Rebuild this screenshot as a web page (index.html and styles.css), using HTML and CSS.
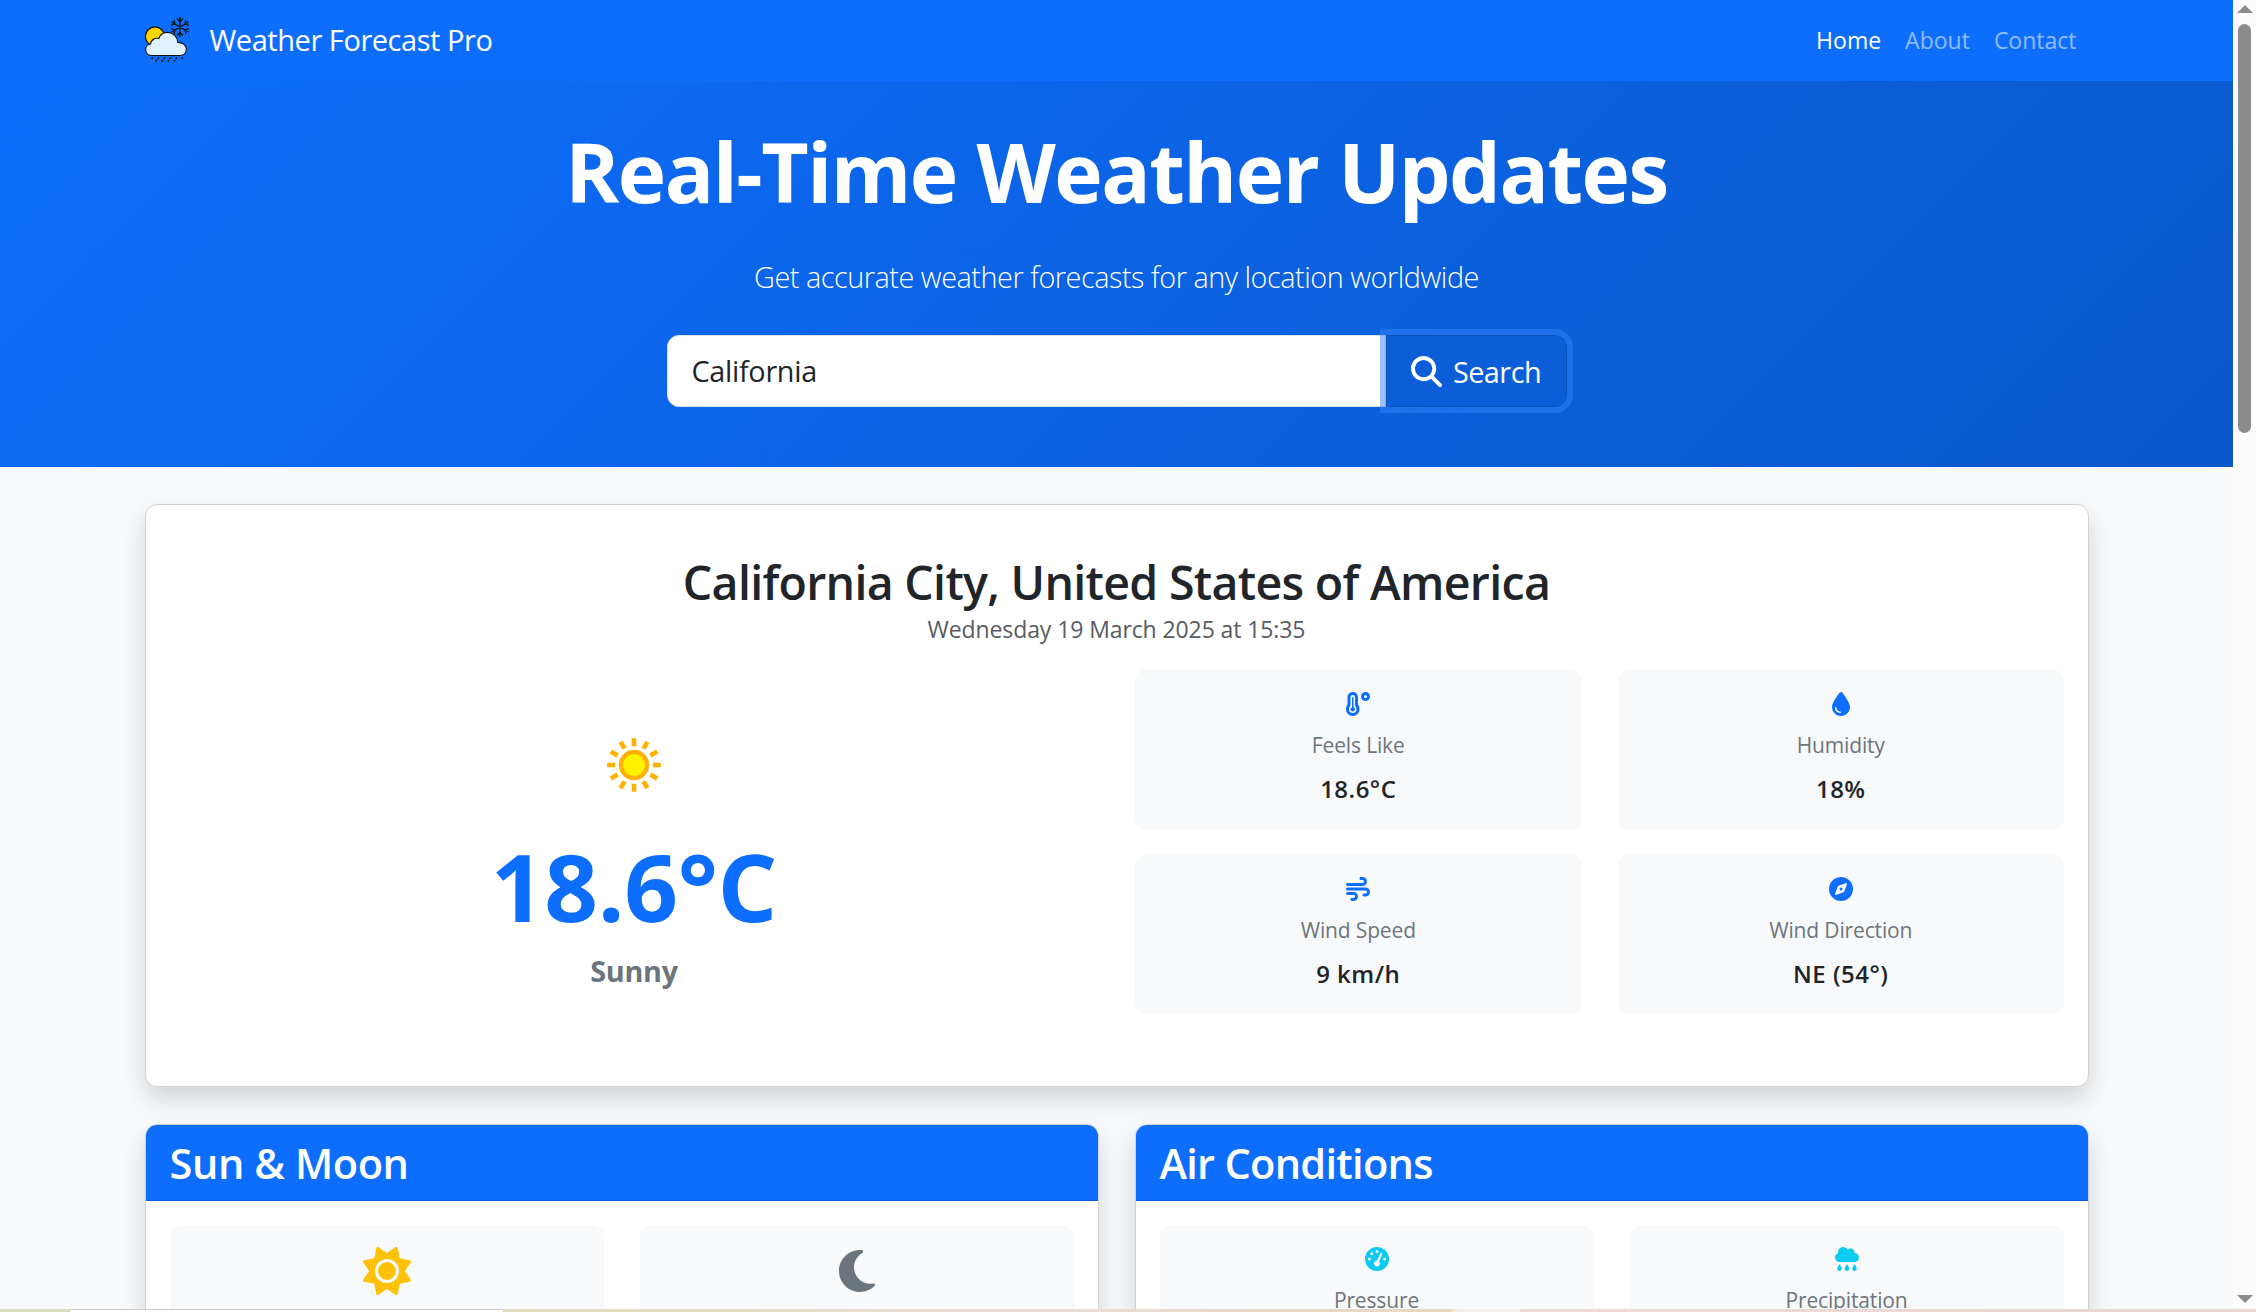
FILE: index.html
```html
<!DOCTYPE html>
<html lang="en">
<head>
<meta charset="utf-8">
<title>Weather Forecast Pro</title>
<link rel="stylesheet" href="styles.css">
</head>
<body>
<div class="window">
<div class="page">
  <nav class="navbar">
    <div class="container nav-row">
      <a class="brand">
        <svg class="brand-logo" viewBox="0 0 45 45">
          <circle cx="10" cy="19.5" r="9.6" fill="#ffd400" stroke="#111" stroke-width="1.2"/>
          <path d="M6 38.5a5.8 5.8 0 0 1-.5-11.500c.2-4 4.500-6.500 8.200-5.500C15.500 16 20 15.200 23 15.300c5.500.2 9.500 4.700 9.800 10 5 0 8.600 3 8.600 7s-3 6.200-6.500 6.200z" fill="#e1f2ff" stroke="#111" stroke-width="1.2"/>
          <g stroke="#111" stroke-width="1.3" fill="none"><path d="M35 0v20M26.500 5l17 10M43.500 5l-17 10M32 1.500l3 3 3-3M32 18.500l3-3 3 3M26 8.500l4-1.500-1-4M44 11.500l-4 1.500 1 4M44 8.500l-4-1.500 1-4M26 11.500l4 1.500-1 4"/></g>
          <path d="M8 40.500l-1.500 1.500M14 40.500l-1.500 1.500M20 40.500l-1.500 1.500M26 40.500l-1.500 1.500M32 40.500l-1.500 1.500M38 40.500l-1.500 1.500M12 43l-1.500 1.500M18 43l-1.500 1.500M24 43l-1.500 1.500M30 43l-1.500 1.500" stroke="#111" stroke-width="1.500"/>
        </svg>
        <span class="brand-name">Weather Forecast Pro</span>
      </a>
      <div class="nav-links"><a class="nav-link active">Home</a><a class="nav-link">About</a><a class="nav-link">Contact</a></div>
    </div>
  </nav>
  <header class="hero">
    <h1 class="hero-title">Real-Time Weather Updates</h1>
    <p class="hero-lead">Get accurate weather forecasts for any location worldwide</p>
    <form class="search">
      <div class="search-input"><span>California</span></div>
      <div class="search-btn">
        <svg class="search-icon" viewBox="0 0 512 512"><path fill="currentColor" d="M416 208c0 45.900-14.900 88.300-40 122.700L502.600 457.400c12.500 12.500 12.500 32.800 0 45.300s-32.800 12.500-45.300 0L330.700 376c-34.400 25.200-76.800 40-122.700 40C93.100 416 0 322.900 0 208S93.100 0 208 0S416 93.100 416 208zM208 352a144 144 0 1 0 0-288 144 144 0 1 0 0 288z"/></svg>
        <span>Search</span>
      </div>
    </form>
  </header>
  <main class="container main">
    <section class="card current">
      <h2 class="place">California City, United States of America</h2>
      <p class="date">Wednesday 19 March 2025 at 15:35</p>
      <div class="current-grid">
        <div class="now">
          <svg class="now-icon" viewBox="0 0 96 96"><circle cx="48" cy="48" r="13" fill="#fff200" stroke="#ffb000" stroke-width="4.300"/><g stroke="#ffb000" stroke-width="4.600"><path d="M48 21.200v8M48 66.800v8M21.200 48h8M66.800 48h8"/><path d="M48 21.200v8M48 66.800v8M21.200 48h8M66.800 48h8" transform="rotate(30 48 48)"/><path d="M48 21.200v8M48 66.800v8M21.200 48h8M66.800 48h8" transform="rotate(60 48 48)"/></g></svg>
          <div class="temp">18.6°C</div>
          <div class="cond">Sunny</div>
        </div>
        <div class="stats">
          <div class="stat">
            <svg class="stat-icon" viewBox="0 0 512 512"><path fill="currentColor" fill-rule="evenodd" d="M144 0C82.100 0 32 50.100 32 112v156.500C12 292.800 0 325 0 368c0 79.500 64.500 144 144 144s144-64.500 144-144c0-43-12-75.200-32-99.500V112C256 50.100 205.900 0 144 0zM96 112a48 48 0 0 1 96 0v166.500c0 10 4.500 19 10 25 13.800 17.300 22 40 22 64.500a80 80 0 0 1-160 0c0-24.500 8.200-47.200 22-64.500 5.500-6 10-15 10-25zM192 368a48 48 0 1 1-64-45.300V112h32v210.700c19 6.600 32 24.400 32 45.300zM416 0a96 96 0 1 0 0 192 96 96 0 1 0 0-192zm0 64a32 32 0 1 1 0 64 32 32 0 1 1 0-64z"/></svg>
            <div class="label">Feels Like</div><div class="value">18.6°C</div>
          </div>
          <div class="stat">
            <svg class="stat-icon" viewBox="-64 0 512 512"><path fill="currentColor" d="M192 512C86 512 0 426 0 320C0 228.800 130.200 57.700 166.600 11.700C172.600 4.200 181.500 0 191.100 0h1.800c9.600 0 18.500 4.200 24.500 11.700C253.800 57.700 384 228.800 384 320c0 106-86 192-192 192zM96 336c0-8.800-7.200-16-16-16s-16 7.200-16 16c0 61.900 50.100 112 112 112c8.800 0 16-7.200 16-16s-7.200-16-16-16c-44.200 0-80-35.800-80-80z"/></svg>
            <div class="label">Humidity</div><div class="value">18%</div>
          </div>
          <div class="stat">
            <svg class="stat-icon" viewBox="0 0 512 512"><path fill="currentColor" d="M288 32c0 17.700 14.300 32 32 32h32c17.700 0 32 14.300 32 32s-14.300 32-32 32H32c-17.700 0-32 14.300-32 32s14.300 32 32 32H352c53 0 96-43 96-96s-43-96-96-96H320c-17.700 0-32 14.300-32 32zm64 352c0 17.700 14.300 32 32 32h32c53 0 96-43 96-96s-43-96-96-96H32c-17.700 0-32 14.300-32 32s14.300 32 32 32H416c17.700 0 32 14.300 32 32s-14.300 32-32 32H384c-17.700 0-32 14.300-32 32zM128 512h32c53 0 96-43 96-96s-43-96-96-96H32c-17.700 0-32 14.300-32 32s14.300 32 32 32H160c17.700 0 32 14.300 32 32s-14.300 32-32 32H128c-17.700 0-32 14.300-32 32s14.300 32 32 32z"/></svg>
            <div class="label">Wind Speed</div><div class="value">9 km/h</div>
          </div>
          <div class="stat">
            <svg class="stat-icon" viewBox="0 0 512 512"><path fill="currentColor" d="M256 512A256 256 0 1 0 256 0a256 256 0 1 0 0 512zm50.700-186.900L162.400 380.600c-19.400 7.500-38.500-11.600-31-31l55.500-144.300c3.300-8.500 9.900-15.100 18.400-18.400l144.300-55.500c19.400-7.500 38.500 11.600 31 31L325.100 306.700c-3.200 8.500-9.900 15.100-18.400 18.400zM288 256a32 32 0 1 0-64 0 32 32 0 1 0 64 0z"/></svg>
            <div class="label">Wind Direction</div><div class="value">NE (54°)</div>
          </div>
        </div>
      </div>
    </section>
    <div class="columns">
      <section class="card panel">
        <h3 class="panel-head sun-head"><span>Sun &amp; Moon</span></h3>
        <div class="panel-body">
          <div class="stat">
            <svg class="big-icon sun" viewBox="0 0 512 512"><path fill="currentColor" d="M361.500 1.200c5 2.100 8.600 6.600 9.600 11.900L391 121l107.900 19.800c5.300 1 9.800 4.600 11.900 9.600s1.500 10.700-1.600 15.200L446.900 256l62.300 90.300c3.100 4.500 3.700 10.200 1.600 15.200s-6.600 8.600-11.900 9.600L391 391 371.100 498.900c-1 5.300-4.600 9.800-9.600 11.900s-10.700 1.500-15.200-1.600L256 446.900l-90.300 62.300c-4.500 3.100-10.200 3.700-15.200 1.600s-8.600-6.600-9.600-11.900L121 391 13.100 371.100c-5.300-1-9.800-4.600-11.900-9.600s-1.500-10.700 1.600-15.200L65.100 256 2.800 165.700c-3.100-4.500-3.700-10.200-1.600-15.200s6.600-8.600 11.900-9.600L121 121 140.900 13.100c1-5.300 4.600-9.800 9.600-11.900s10.700-1.500 15.200 1.600L256 65.100 346.300 2.800c4.500-3.100 10.200-3.700 15.200-1.600zM160 256a96 96 0 1 1 192 0 96 96 0 1 1-192 0zm224 0a128 128 0 1 0-256 0 128 128 0 1 0 256 0z"/></svg>
          </div>
          <div class="stat">
            <svg class="big-icon moon" viewBox="-64 0 512 512"><path fill="currentColor" d="M223.500 32C100 32 0 132.300 0 256S100 480 223.500 480c60.600 0 115.500-24.200 155.800-63.400c5-4.900 6.300-12.500 3.100-18.700s-10.100-9.700-17-8.500c-9.800 1.700-19.800 2.600-30.100 2.600c-96.900 0-175.500-78.800-175.500-176c0-65.800 36-123.100 89.300-153.300c6.100-3.500 9.200-10.500 7.700-17.300s-7.300-11.900-14.300-12.500c-6.300-.5-12.600-.8-19-.8z"/></svg>
          </div>
        </div>
      </section>
      <section class="card panel">
        <h3 class="panel-head air-head"><span>Air Conditions</span></h3>
        <div class="panel-body">
          <div class="stat info">
            <svg class="stat-icon" viewBox="0 0 512 512"><path fill="currentColor" d="M0 256a256 256 0 1 1 512 0A256 256 0 1 1 0 256zM288 96a32 32 0 1 0-64 0 32 32 0 1 0 64 0zM256 416c35.300 0 64-28.700 64-64c0-17.400-6.900-33.100-18.100-44.600L366 161.700c5.300-12.100-.2-26.300-12.300-31.600s-26.300 .2-31.600 12.300L257.900 288c-.6 0-1.300 0-1.900 0c-35.300 0-64 28.700-64 64s28.700 64 64 64zM176 144a32 32 0 1 0-64 0 32 32 0 1 0 64 0zM96 288a32 32 0 1 0 0-64 32 32 0 1 0 0 64zm352-32a32 32 0 1 0-64 0 32 32 0 1 0 64 0z"/></svg>
            <div class="label">Pressure</div>
          </div>
          <div class="stat info">
            <svg class="stat-icon" viewBox="0 0 512 512"><path fill="currentColor" d="M96 320c-53 0-96-43-96-96c0-42.500 27.600-78.600 65.900-91.200C64.700 126.100 64 119.100 64 112C64 50.100 114.100 0 176 0c43.100 0 80.500 24.300 99.200 60c14.700-17.100 36.500-28 60.800-28c44.200 0 80 35.800 80 80c0 5.500-.6 10.800-1.600 16c.5 0 1.100 0 1.600 0c53 0 96 43 96 96s-43 96-96 96H96zm-6.800 52c1.300-2.500 3.900-4 6.800-4s5.400 1.500 6.800 4l35.100 64.600c4.100 7.500 6.200 15.800 6.200 24.300v3c0 26.500-21.500 48-48 48s-48-21.500-48-48v-3c0-8.500 2.100-16.900 6.200-24.300L89.200 372zm160 0c1.300-2.500 3.900-4 6.800-4s5.400 1.500 6.800 4l35.100 64.600c4.100 7.500 6.200 15.800 6.200 24.300v3c0 26.500-21.500 48-48 48s-48-21.500-48-48v-3c0-8.500 2.100-16.900 6.200-24.300L249.200 372zm160 0c1.300-2.500 3.900-4 6.800-4s5.400 1.500 6.800 4l35.100 64.600c4.100 7.500 6.200 15.800 6.200 24.300v3c0 26.500-21.500 48-48 48s-48-21.500-48-48v-3c0-8.500 2.100-16.900 6.200-24.300L409.200 372z"/></svg>
            <div class="label">Precipitation</div>
          </div>
        </div>
      </section>
    </div>
  </main>
</div>
<div class="scrollbar">
  <svg class="arrow" viewBox="0 0 16 8"><path d="M8 0l8 8H0z" fill="#8b8b8b"/></svg>
  <div class="thumb"></div>
  <svg class="arrow" viewBox="0 0 16 8"><path d="M0 0h16L8 8z" fill="#8b8b8b"/></svg>
</div>
</div>
<div class="desktop-edge"></div>
</body>
</html>
```
FILE: styles.css
```css
* { box-sizing: border-box; }
body { margin: 0; width: 2256px; height: 1312px; overflow: hidden; display: flex; flex-direction: column; background: #f8f9fa; color: #212529; font-family: "Open Sans", "Noto Sans", sans-serif; font-size: 23px; }
h1, h2, h3, p { margin: 0; }
span, .nav-link, .label, .value { white-space: nowrap; }
.window { display: flex; height: 1309px; overflow: hidden; }
.page { width: 2233px; height: 1309px; overflow: hidden; }
.container { width: 1980px; margin: 0 auto; padding: 0 18px; }
.navbar { height: 81px; background: #0d6efd; }
.nav-row { display: flex; justify-content: space-between; height: 79px; align-items: center; }
.brand { display: flex; align-items: center; gap: 20px; color: #fff; }
.brand-logo { width: 45px; height: 45px; }
.brand-name { font-size: 29px; line-height: 45px; letter-spacing: -0.45px; }
.nav-links { display: flex; gap: 24px; margin-right: 12px; }
.nav-link { font-size: 23px; line-height: 36px; color: rgba(255,255,255,.55); }
.nav-link.active { color: #fff; }
.hero { height: 386px; padding-top: 45px; background: linear-gradient(135deg, #0d6efd, #0a58ca); color: #fff; display: flex; flex-direction: column; align-items: center; }
.hero-title { font-size: 82px; line-height: 90px; font-weight: 700; letter-spacing: -1.5px; white-space: nowrap; }
.hero-lead { font-size: 28.8px; line-height: 45px; font-weight: 300; letter-spacing: -0.46px; margin-top: 38px; white-space: nowrap; }
.search { display: flex; width: 900px; height: 72px; margin-top: 36px; }
.search-input { flex: 1; background: #fff; border: 1px solid #dee2e6; border-radius: 12px 0 0 12px; color: #212529; font-size: 28.8px; line-height: 69px; letter-spacing: -0.3px; padding-left: 24px; }
.search-btn { width: 181px; border: 1px solid #0a53be; border-radius: 0 12px 12px 0; background: #0b5ed7; box-shadow: 0 0 0 6px rgba(49,132,253,.5); display: flex; align-items: center; justify-content: center; gap: 11px; font-size: 28.8px; line-height: 69px; letter-spacing: -0.5px; }
.search-icon { width: 31px; height: 31px; }
.main { padding-top: 37px; }
.card { background: #fff; border: 1px solid #d0d2d4; border-radius: 12px; box-shadow: 0 12px 24px rgba(0,0,0,.15); }
.current { height: 583px; padding: 48px 23px 0; }
.place { text-align: center; font-size: 46.5px; font-weight: 600; line-height: 58px; letter-spacing: -0.7px; white-space: nowrap; }
.date { text-align: center; line-height: 36px; letter-spacing: -0.1px; color: #585c60; }
.current-grid { display: grid; grid-template-columns: 931px 929px; gap: 35.5px; margin-top: 22px; }
.now { display: flex; flex-direction: column; align-items: center; padding-top: 48px; }
.now-icon { width: 96px; height: 96px; }
.temp { font-size: 94px; line-height: 108px; font-weight: 700; letter-spacing: -0.3px; color: #0d6efd; margin-top: 19px; }
.cond { font-size: 28.8px; line-height: 36px; font-weight: 700; letter-spacing: -0.3px; color: #6c757d; margin-top: 13px; }
.stats { display: grid; grid-template-columns: 1fr 1fr; gap: 24px 36px; align-content: start; }
.stat { height: 160.500px; background: #f8f9fa; border-radius: 12px; padding-top: 23px; display: flex; flex-direction: column; align-items: center; color: #0d6efd; }
.stat-icon { width: 24px; height: 24px; }
.label { font-size: 21px; line-height: 32px; letter-spacing: -0.15px; color: #6c757d; margin-top: 13px; }
.value { font-size: 24px; line-height: 36px; font-weight: 600; letter-spacing: 0.5px; color: #212529; margin-top: 10px; }
.columns { display: grid; grid-template-columns: 1fr 1fr; gap: 36px; margin-top: 37px; }
.panel { height: 300px; overflow: hidden; }
.panel-head { height: 76px; padding-left: 24px; background: #0d6efd; border-bottom: 1px solid #0c5fdb; color: #fff; font-size: 41.500px; line-height: 76px; font-weight: 600; }
.sun-head { letter-spacing: -0.4px; }
.air-head { letter-spacing: -0.7px; }
.panel-body { display: grid; grid-template-columns: 1fr 1fr; gap: 36px; padding: 24px; }
.panel-body .stat { padding-top: 22px; }
.big-icon { width: 48px; height: 48px; }
.sun { color: #ffc107; }
.moon { color: #6c757d; }
.panel-body .info { color: #0dcaf0; }
.scrollbar { width: 23px; height: 1309px; background: #fcfcfc; display: flex; flex-direction: column; align-items: center; padding-top: 5px; }
.arrow { width: 16px; height: 8px; }
.thumb { width: 13px; height: 409px; border-radius: 7px; background: #8b8b8b; margin: 11px 0 862px; }
.desktop-edge { height: 3px; background: linear-gradient(#c9c9c9 0 1.500px, #fff 1.500px) 70px 0 / 433px 3px no-repeat, linear-gradient(90deg, #d8dcc0 0 70px, #e0dcbc 502px, #eaddd8 1000px, #e5d8c2 1450px, #f5f0ea 1457px 1520px, #ecdcd5 1520px, #e6d8d0); }
```
